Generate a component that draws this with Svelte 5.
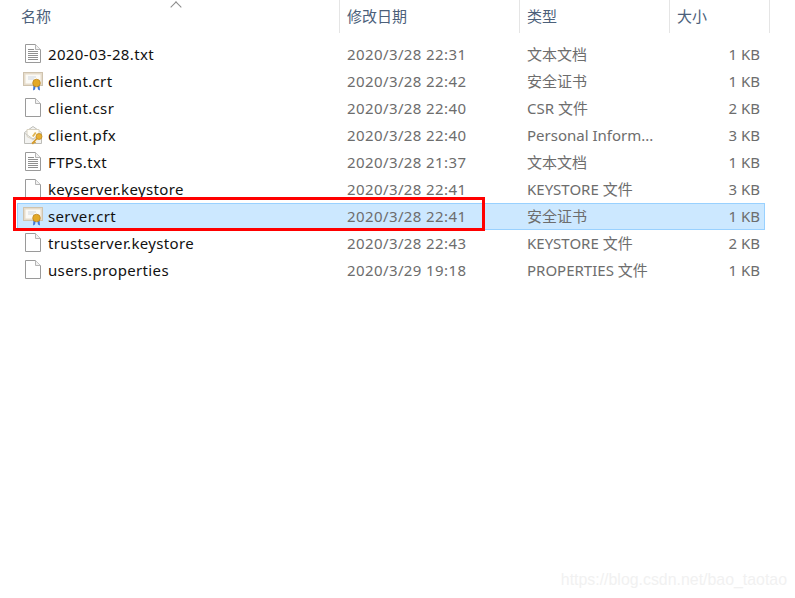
<script lang="ts">
  const files = [
    { name: '2020-03-28.txt', date: '2020/3/28 22:31', type: '文本文档', size: '1 KB', icon: 'txt' },
    { name: 'client.crt', date: '2020/3/28 22:42', type: '安全证书', size: '1 KB', icon: 'crt' },
    { name: 'client.csr', date: '2020/3/28 22:40', type: 'CSR 文件', size: '2 KB', icon: 'blank' },
    { name: 'client.pfx', date: '2020/3/28 22:40', type: 'Personal Inform...', size: '3 KB', icon: 'pfx' },
    { name: 'FTPS.txt', date: '2020/3/28 21:37', type: '文本文档', size: '1 KB', icon: 'txt' },
    { name: 'keyserver.keystore', date: '2020/3/28 22:41', type: 'KEYSTORE 文件', size: '3 KB', icon: 'blank' },
    { name: 'server.crt', date: '2020/3/28 22:41', type: '安全证书', size: '1 KB', icon: 'crt', selected: true },
    { name: 'trustserver.keystore', date: '2020/3/28 22:43', type: 'KEYSTORE 文件', size: '2 KB', icon: 'blank' },
    { name: 'users.properties', date: '2020/3/29 19:18', type: 'PROPERTIES 文件', size: '1 KB', icon: 'blank' }
  ];
</script>

{#snippet fileIcon(kind)}
  <svg class="icon" width="20" height="20" viewBox="0 0 20 20">
    {#if kind === 'crt'}
      <rect x="0.5" y="1.5" width="19" height="13" fill="#e6dccb" stroke="#cfc3ae" />
      <rect x="2.5" y="3.500" width="15" height="9" fill="#fbfaf6" />
      <path d="M5 6h8M5 8h6" stroke="#cfd6de" />
      <path d="M10.500 14l-.5 5.500 2-1 1-4.500zM14 14l1 4.500 2 1-.5-5.500z" fill="#3f78d8" />
      <circle cx="13.500" cy="12" r="3.800" fill="#e3a927" stroke="#b9801a" stroke-width="0.7" />
    {:else if kind === 'pfx'}
      <path d="M1.500 7.500L10 1.500l8.500 6V18.500H1.500z" fill="#f3f3f1" stroke="#bdbdb8" />
      <path d="M4 4.500h12v7l-6 3-6-3z" fill="#fffdf6" stroke="#d8d2c2" />
      <path d="M1.500 8l8.500 6 8.500-6" fill="none" stroke="#c9c9c4" />
      <path d="M9 11l3-4 1.500 1-3 4z" fill="#e0b552" />
      <circle cx="16" cy="11.500" r="3" fill="#e8b033" stroke="#b98419" stroke-width="0.7" />
      <path d="M14 13.500l-5 5M11 16.500l1.500 1.500M9.500 18l1 1" stroke="#d49a28" stroke-width="1.600" fill="none" />
    {:else}
      <path d="M2.500 0.500h10l5 5v13h-15z" fill="#fff" stroke="#9a9a9a" />
      <path d="M12.500 0.500v5h5" fill="#f1f1f1" stroke="#b5b5b5" />
      {#if kind === 'txt'}
        <path d="M5 5.500h6M5 7.500h10M5 9.500h10M5 11.500h10M5 13.500h10M5 15.500h10" stroke="#8f8f8f" />
      {/if}
    {/if}
  </svg>
{/snippet}

<div class="window">
  <div class="header">
    <div class="col name">名称<span class="sort"></span></div>
    <div class="col">修改日期</div>
    <div class="col">类型</div>
    <div class="col">大小</div>
  </div>

  <div class="list">
    {#each files as file}
      <div class="row" class:selected={file.selected}>
        <div class="cell file">
          {@render fileIcon(file.icon)}
          <span class="fname">{file.name}</span>
        </div>
        <div class="cell date">{file.date}</div>
        <div class="cell">{file.type}</div>
        <div class="cell size">{file.size}</div>
      </div>
    {/each}
  </div>

  <div class="highlight"></div>
  <div class="watermark">https://blog.csdn.net/bao_taotao</div>
</div>

<style>
  :global(body) {
    background: #fff;
  }

  .window {
    position: relative;
    width: 795px;
    height: 598px;
    overflow: hidden;
    background: #fff;
    font-family: "Noto Sans", "Noto Sans CJK SC", sans-serif;
    font-size: 15px;
  }

  .header {
    display: grid;
    grid-template-columns: 340px 180px 150px 100px;
    height: 32px;
  }

  .col {
    position: relative;
    padding-left: 7px;
    border-right: 1px solid #e5e5e5;
    color: #4c607a;
    line-height: 33px;
  }

  .col.name {
    padding-left: 21px;
  }

  .sort {
    position: absolute;
    left: 172px;
    top: 3px;
    width: 7px;
    height: 7px;
    border-left: 1px solid #8a8a8a;
    border-top: 1px solid #8a8a8a;
    transform: rotate(45deg);
  }

  .list {
    padding: 9px 30px 0 17px;
  }

  .row {
    display: grid;
    grid-template-columns: 324px 180px 150px 94px;
    height: 27px;
    box-sizing: border-box;
    align-items: center;
    color: #6d6d6d;
    border: 1px solid transparent;
  }

  .row.selected {
    background: #cce8ff;
    border-color: #99d1ff;
  }

  .cell {
    white-space: nowrap;
    padding-left: 6px;
    padding-bottom: 2px;
    margin-left: -1px;
  }

  .file {
    display: flex;
    align-items: center;
    gap: 5px;
    color: #111;
  }

  .fname {
    letter-spacing: 0.35px;
  }

  .date {
    letter-spacing: 0.4px;
  }

  .icon {
    flex: none;
  }

  .size {
    text-align: right;
    padding-right: 6px;
  }

  .highlight {
    position: absolute;
    left: 13px;
    top: 197px;
    width: 466px;
    height: 28px;
    border: 3px solid #f00;
  }

  .watermark {
    position: absolute;
    right: 8px;
    top: 571px;
    font-family: "Liberation Sans", sans-serif;
    font-size: 15.9px;
    color: #f1f1f1;
  }
</style>
